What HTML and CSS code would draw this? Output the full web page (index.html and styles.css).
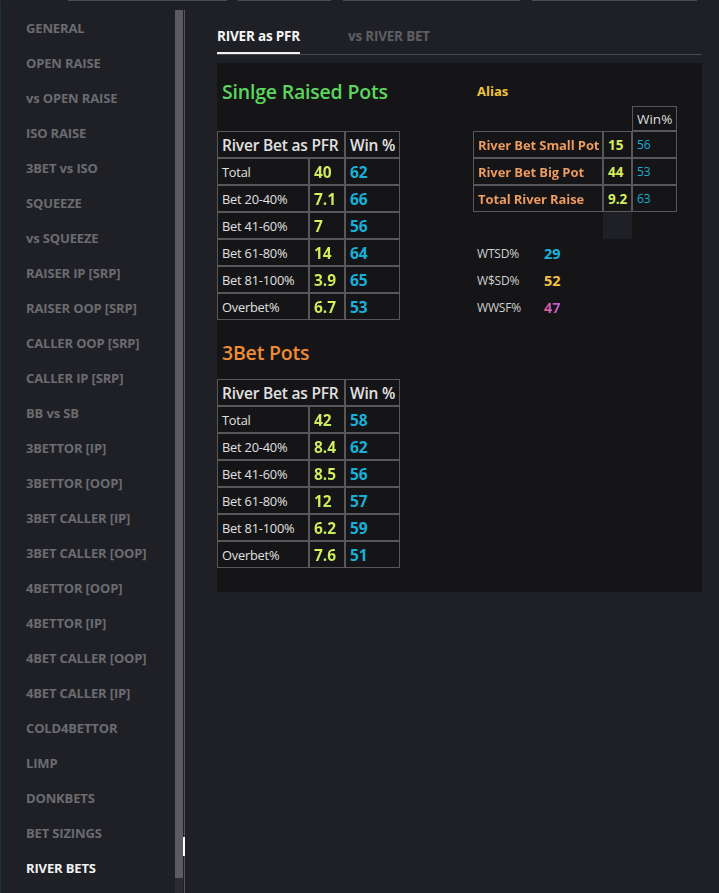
FILE: index.html
```html
<!DOCTYPE html>
<html>
<head>
    <meta charset="UTF-8">
    <meta name="viewport" content="width=device-width, initial-scale=1.0">
    <title>River Bets</title>
    <link rel="stylesheet" href="styles.css">
</head>
<body>
    <div class="topline">
        <span class="seg seg-1"></span>
        <span class="seg seg-2"></span>
        <span class="seg seg-3"></span>
        <span class="seg seg-4"></span>
    </div>

    <div class="app">
        <nav class="sidebar">
            <div class="nav-item">GENERAL</div>
            <div class="nav-item">OPEN RAISE</div>
            <div class="nav-item">vs OPEN RAISE</div>
            <div class="nav-item">ISO RAISE</div>
            <div class="nav-item">3BET vs ISO</div>
            <div class="nav-item">SQUEEZE</div>
            <div class="nav-item">vs SQUEEZE</div>
            <div class="nav-item">RAISER IP [SRP]</div>
            <div class="nav-item">RAISER OOP [SRP]</div>
            <div class="nav-item">CALLER OOP [SRP]</div>
            <div class="nav-item">CALLER IP [SRP]</div>
            <div class="nav-item">BB vs SB</div>
            <div class="nav-item">3BETTOR [IP]</div>
            <div class="nav-item">3BETTOR [OOP]</div>
            <div class="nav-item">3BET CALLER [IP]</div>
            <div class="nav-item">3BET CALLER [OOP]</div>
            <div class="nav-item">4BETTOR [OOP]</div>
            <div class="nav-item">4BETTOR [IP]</div>
            <div class="nav-item">4BET CALLER [OOP]</div>
            <div class="nav-item">4BET CALLER [IP]</div>
            <div class="nav-item">COLD4BETTOR</div>
            <div class="nav-item">LIMP</div>
            <div class="nav-item">DONKBETS</div>
            <div class="nav-item">BET SIZINGS</div>
            <div class="nav-item active">RIVER BETS</div>
        </nav>

        <div class="scroll">
            <div class="scroll-track">
                <div class="scroll-thumb"></div>
                <div class="caret"></div>
            </div>
            <div class="scroll-line"></div>
        </div>

        <main class="main">
            <div class="tabs">
                <div class="tab active">RIVER as PFR</div>
                <div class="tab">vs RIVER BET</div>
            </div>

            <div class="panel">
                <div class="col-left">
                    <h2 class="title green">Sinlge Raised Pots</h2>
                    <table class="stats">
                        <tr class="head">
                            <th colspan="2">River Bet as PFR</th>
                            <th>Win %</th>
                        </tr>
                        <tr><td class="label">Total</td><td class="val">40</td><td class="win">62</td></tr>
                        <tr><td class="label">Bet 20-40%</td><td class="val">7.1</td><td class="win">66</td></tr>
                        <tr><td class="label">Bet 41-60%</td><td class="val">7</td><td class="win">56</td></tr>
                        <tr><td class="label">Bet 61-80%</td><td class="val">14</td><td class="win">64</td></tr>
                        <tr><td class="label">Bet 81-100%</td><td class="val">3.9</td><td class="win">65</td></tr>
                        <tr><td class="label">Overbet%</td><td class="val">6.7</td><td class="win">53</td></tr>
                    </table>

                    <h2 class="title orange second">3Bet Pots</h2>
                    <table class="stats">
                        <tr class="head">
                            <th colspan="2">River Bet as PFR</th>
                            <th>Win %</th>
                        </tr>
                        <tr><td class="label">Total</td><td class="val">42</td><td class="win">58</td></tr>
                        <tr><td class="label">Bet 20-40%</td><td class="val">8.4</td><td class="win">62</td></tr>
                        <tr><td class="label">Bet 41-60%</td><td class="val">8.5</td><td class="win">56</td></tr>
                        <tr><td class="label">Bet 61-80%</td><td class="val">12</td><td class="win">57</td></tr>
                        <tr><td class="label">Bet 81-100%</td><td class="val">6.2</td><td class="win">59</td></tr>
                        <tr><td class="label">Overbet%</td><td class="val">7.6</td><td class="win">51</td></tr>
                    </table>
                </div>

                <div class="col-right">
                    <div class="alias">Alias</div>
                    <table class="alias-table">
                        <tr class="alias-head">
                            <td class="blank"></td>
                            <td class="blank"></td>
                            <td class="win-head">Win%</td>
                        </tr>
                        <tr><td class="a-label">River Bet Small Pot</td><td class="a-val">15</td><td class="a-win">56</td></tr>
                        <tr><td class="a-label">River Bet Big Pot</td><td class="a-val">44</td><td class="a-win">53</td></tr>
                        <tr><td class="a-label">Total River Raise</td><td class="a-val">9.2</td><td class="a-win">63</td></tr>
                        <tr class="alias-foot">
                            <td class="blank"></td>
                            <td class="filler"></td>
                            <td class="blank"></td>
                        </tr>
                    </table>

                    <div class="showdown">
                        <div class="sd-row"><span class="sd-label">WTSD%</span><span class="sd-val cyan">29</span></div>
                        <div class="sd-row"><span class="sd-label">W$SD%</span><span class="sd-val gold">52</span></div>
                        <div class="sd-row"><span class="sd-label">WWSF%</span><span class="sd-val pink">47</span></div>
                    </div>
                </div>
            </div>
        </main>
    </div>
</body>
</html>
```

FILE: styles.css
```css
body {
    font-family: "Open Sans", "Noto Sans", sans-serif;
    margin: 0;
    background-color: #1f2025;
    color: #dcdcdc;
    height: 893px;
    overflow: hidden;
}

.topline {
    display: flex;
    height: 1px;
}

.seg {
    height: 1px;
    background-color: #4b4b50;
}

.seg-1 { margin-left: 68px; width: 159px; }
.seg-2 { margin-left: 11px; width: 93px; }
.seg-3 { margin-left: 12px; width: 177px; }
.seg-4 { margin-left: 12px; width: 165px; }

.app {
    display: flex;
    height: 892px;
}

/* sidebar */
.sidebar {
    width: 174px;
    padding-top: 10px;
    border-left: 1px solid #1d3327;
}

.nav-item {
    height: 35px;
    line-height: 35px;
    padding-left: 25px;
    font-size: 13px;
    font-weight: 700;
    color: #6b6b70;
    letter-spacing: -0.15px;
    white-space: nowrap;
}

.nav-item.active {
    color: #f2f2f2;
}

.scroll {
    display: flex;
    width: 10px;
    padding-top: 9px;
}

.scroll-track {
    position: relative;
    width: 8px;
    background-color: #2b2b31;
}

.scroll-thumb {
    height: 868px;
    background-color: #5b5b61;
}

.caret {
    position: absolute;
    left: 8px;
    top: 827px;
    width: 2px;
    height: 19px;
    background-color: #ffffff;
}

.scroll-line {
    width: 1px;
    margin-left: 1px;
    background-color: #55555a;
}

/* main */
.main {
    flex: 1;
    padding: 25px 17px 0 32px;
}

.tabs {
    display: flex;
    border-bottom: 1px solid #4a4a4f;
    margin-bottom: 8px;
}

.tab {
    font-size: 13.5px;
    font-weight: 700;
    line-height: 20px;
    padding-bottom: 6px;
    margin-right: 48px;
    color: #5e5e63;
    border-bottom: 2px solid transparent;
    letter-spacing: -0.2px;
}

.tab.active {
    color: #f5f5f5;
    border-bottom-color: #f0f0f0;
}

.panel {
    display: flex;
    background-color: #151517;
    padding: 16px 0 24px 0;
}

.col-left {
    width: 256px;
}

.title {
    margin: 0;
    padding-left: 5px;
    font-size: 19.5px;
    font-weight: 600;
    line-height: 26px;
    letter-spacing: -0.2px;
}

.green { color: #5bd85c; }
.orange { color: #f08b35; }

.col-left .title {
    margin-bottom: 26px;
}

.col-left .title.second {
    margin-top: 20px;
    margin-bottom: 13px;
}

.stats {
    border-collapse: separate;
    border-spacing: 0;
    width: 183px;
}

.stats th,
.stats td {
    border: 1px solid #58585a;
    padding: 0 0 0 4px;
    height: 25px;
    text-align: left;
    white-space: nowrap;
}

.stats th {
    font-size: 15.5px;
    font-weight: 600;
    color: #e2e2e2;
    letter-spacing: -0.2px;
}

.stats .label {
    width: 86px;
    font-size: 12.8px;
    color: #e0e0e0;
    letter-spacing: -0.2px;
}

.stats .val {
    width: 30px;
    font-size: 15.5px;
    font-weight: 700;
    background: linear-gradient(#f3f35a, #b4e85c);
    -webkit-background-clip: text;
    background-clip: text;
    color: transparent;
}

.stats .win {
    font-size: 15.5px;
    font-weight: 700;
    color: #18b0d8;
}

/* right column */
.col-right {
    padding-top: 3px;
}

.alias {
    padding-left: 4px;
    font-size: 13px;
    font-weight: 700;
    line-height: 18px;
    color: #f2c23e;
    margin-bottom: 6px;
}

.alias-table {
    border-collapse: separate;
    border-spacing: 0;
}

.alias-table td {
    border: 1px solid #58585a;
    height: 25px;
    padding: 0 0 0 4px;
    white-space: nowrap;
}

.alias-table .blank {
    border-color: transparent;
}

.alias-head td {
    height: 23px;
}

.win-head {
    font-size: 13.5px;
    color: #dedede;
}

.a-label {
    width: 124px;
    font-size: 13px;
    font-weight: 700;
    color: transparent;
    letter-spacing: -0.1px;
}

.alias-table td.a-label {
    background: linear-gradient(#f6b46a, #ec8a55);
    -webkit-background-clip: text;
    background-clip: text;
}

.a-val {
    width: 23px;
    font-size: 13.5px;
    font-weight: 700;
    color: #d5ee5c;
}

.a-win {
    width: 39px;
    font-size: 12px;
    color: #19acd4;
}

.alias-foot td {
    border: none;
    height: 27px;
}

.alias-table .filler {
    background-color: #1f2025;
}

.showdown {
    margin-top: 1px;
}

.sd-row {
    display: flex;
    height: 27px;
    align-items: center;
    padding-left: 4px;
}

.sd-label {
    width: 67px;
    font-size: 12px;
    color: #d0d0d0;
    letter-spacing: -0.2px;
}

.sd-val {
    font-size: 14.5px;
    font-weight: 700;
}

.cyan { color: #19b2d8; }
.gold { color: #f5c140; }
.pink {
    background: linear-gradient(90deg, #e45a9c, #b060d8);
    -webkit-background-clip: text;
    background-clip: text;
    color: transparent;
}
```
